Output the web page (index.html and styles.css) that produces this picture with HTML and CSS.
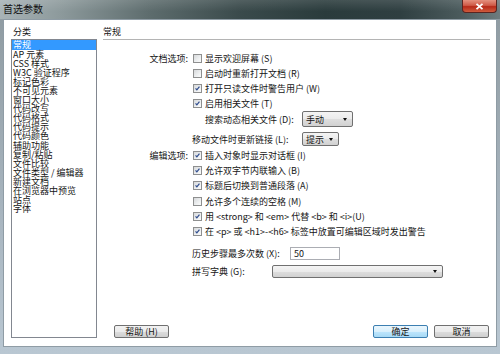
FILE: index.html
```html
<!DOCTYPE html>
<html lang="zh-CN">
<head>
<meta charset="utf-8">
<title>首选参数</title>
<link rel="stylesheet" href="styles.css">
</head>
<body>
<div class="window">
  <div class="titlebar">
    <span class="title">首选参数</span>
    <div class="close"><svg width="9" height="7" viewBox="0 0 9 7"><path d="M1.5 0.8 L7.5 6.2 M7.5 0.8 L1.5 6.2" stroke="#fff" stroke-width="1.8" fill="none"/></svg></div>
  </div>
  <div class="frame">
    <div class="client">
      <div class="sidebar">
        <div class="cap">分类</div>
        <ul class="list">
          <li class="sel">常规</li>
          <li>AP 元素</li>
          <li>CSS 样式</li>
          <li>W3C 验证程序</li>
          <li>标记色彩</li>
          <li>不可见元素</li>
          <li>窗口大小</li>
          <li>代码改写</li>
          <li>代码格式</li>
          <li>代码提示</li>
          <li>代码颜色</li>
          <li>辅助功能</li>
          <li>复制/粘贴</li>
          <li>文件比较</li>
          <li>文件类型 / 编辑器</li>
          <li>新建文档</li>
          <li>在浏览器中预览</li>
          <li>站点</li>
          <li>字体</li>
        </ul>
      </div>
      <div class="main">
        <div class="heading">常规</div>
        <div class="rows">
          <div class="row"><span class="lbl">文档选项:</span><span class="cb"></span><span>显示欢迎屏幕 (S)</span></div>
          <div class="row"><span class="lbl"></span><span class="cb"></span><span>启动时重新打开文档 (R)</span></div>
          <div class="row"><span class="lbl"></span><span class="cb on"><svg viewBox="0 0 9 9"><path d="M2 4.3 L3.7 6.3 L7 2"/></svg></span><span>打开只读文件时警告用户 (W)</span></div>
          <div class="row"><span class="lbl"></span><span class="cb on"><svg viewBox="0 0 9 9"><path d="M2 4.3 L3.7 6.3 L7 2"/></svg></span><span>启用相关文件 (T)</span></div>
          <div class="row sub r-search"><span class="slbl w97">搜索动态相关文件 (D):</span><span class="select s-manual"><span>手动</span><i class="arrow"></i></span></div>
          <div class="row sub2 r-move"><span class="slbl w110">移动文件时更新链接 (L):</span><span class="select s-hint"><span>提示</span><i class="arrow"></i></span></div>
          <div class="row r-edit"><span class="lbl">编辑选项:</span><span class="cb on"><svg viewBox="0 0 9 9"><path d="M2 4.3 L3.7 6.3 L7 2"/></svg></span><span>插入对象时显示对话框 (I)</span></div>
          <div class="row r-edit"><span class="lbl"></span><span class="cb on"><svg viewBox="0 0 9 9"><path d="M2 4.3 L3.7 6.3 L7 2"/></svg></span><span>允许双字节内联输入 (B)</span></div>
          <div class="row r-edit"><span class="lbl"></span><span class="cb on"><svg viewBox="0 0 9 9"><path d="M2 4.3 L3.7 6.3 L7 2"/></svg></span><span>标题后切换到普通段落 (A)</span></div>
          <div class="row r-edit"><span class="lbl"></span><span class="cb"></span><span>允许多个连续的空格 (M)</span></div>
          <div class="row r-edit"><span class="lbl"></span><span class="cb on"><svg viewBox="0 0 9 9"><path d="M2 4.3 L3.7 6.3 L7 2"/></svg></span><span>用 &lt;strong&gt; 和 &lt;em&gt; 代替 &lt;b&gt; 和 &lt;i&gt;(U)</span></div>
          <div class="row r-edit"><span class="lbl"></span><span class="cb on"><svg viewBox="0 0 9 9"><path d="M2 4.3 L3.7 6.3 L7 2"/></svg></span><span>在 &lt;p&gt; 或 &lt;h1&gt;-&lt;h6&gt; 标签中放置可编辑区域时发出警告</span></div>
          <div class="row sub2 r-hist"><span class="slbl w98">历史步骤最多次数 (X):</span><span class="input">50</span></div>
          <div class="row sub2 r-spell"><span class="slbl w80">拼写字典 (G):</span><span class="select s-dict"><span></span><i class="arrow"></i></span></div>
        </div>
        <div class="footer">
          <span class="btn">帮助 (H)</span>
          <span class="btn default">确定</span>
          <span class="btn">取消</span>
        </div>
      </div>
    </div>
  </div>
</div>
</body>
</html>
```

FILE: styles.css
```css
* { box-sizing: border-box; }
html, body { margin: 0; padding: 0; }
body {
  width: 500px;
  height: 354px;
  overflow: hidden;
  font-family: "Noto Sans CJK SC", "Liberation Sans", sans-serif;
  font-size: 9px;
  color: #151515;
  background: #a9b6bf;
}
.window {
  width: 500px;
  height: 354px;
  display: flex;
  flex-direction: column;
  background: linear-gradient(to bottom, #8e9aa0 0%, #a8b5bf 60%, #b9c7d2 100%);
}
.titlebar {
  height: 19px;
  display: flex;
  justify-content: space-between;
  align-items: flex-start;
  background:
    linear-gradient(to bottom, rgba(255,255,255,0.12) 0%, rgba(255,255,255,0) 60%),
    linear-gradient(to right, #a8b3b6 0%, #8d9a9c 12%, #5d6c6d 30%, #3a4a4b 48%, #2a3b3c 65%, #2f3f41 80%, #4a5a5c 92%, #6e7c7f 100%);
}
.title {
  font-size: 10px;
  line-height: 10px;
  margin: 4px 0 0 3px;
  color: #111;
}
.close {
  width: 35px;
  height: 13px;
  margin-right: 3px;
  border: 1px solid #5a2420;
  border-top: none;
  border-radius: 0 0 4px 4px;
  background: linear-gradient(to bottom, #e4917f 0%, #cf5a47 45%, #b72a19 55%, #cf5c3e 100%);
  display: flex;
  align-items: center;
  justify-content: center;
}
.frame {
  flex: 1;
  display: flex;
  padding: 0 3px 7px 3px;
}
.client {
  flex: 1;
  display: flex;
  background: #fff;
  border: 1px solid #8f9ca5;
  padding: 7px 6px 8px 7px;
}
.sidebar {
  width: 86px;
  display: flex;
  flex-direction: column;
}
.cap {
  height: 12px;
  line-height: 10px;
  padding-left: 2px;
}
.list {
  flex: 1;
  margin: 0;
  padding: 0;
  list-style: none;
  border: 1px solid #828790;
}
.list li {
  height: 9.1px;
  line-height: 9.1px;
  padding-left: 1px;
  white-space: nowrap;
}
.list li.sel {
  height: 9.6px;
  background: #3399ff;
  color: #fff;
}
.main {
  flex: 1;
  margin-left: 6px;
  display: flex;
  flex-direction: column;
}
.heading {
  height: 13px;
  line-height: 10px;
  border-bottom: 1px solid #b4b4b4;
}
.rows {
  margin-top: 11px;
  display: flex;
  flex-direction: column;
}
.row {
  height: 15px;
  display: flex;
  align-items: center;
  white-space: nowrap;
}
.lbl {
  width: 85px;
  text-align: right;
}
.cb {
  width: 9px;
  height: 9px;
  margin: 0 3px 0 5px;
  border: 1px solid #8e8f8f;
  background: linear-gradient(135deg, #d6d8da 0%, #eef0f1 60%, #fbfbfb 100%);
  display: flex;
}
.cb svg {
  width: 7px;
  height: 7px;
}
.cb svg path {
  fill: none;
  stroke: #2c4a8c;
  stroke-width: 1.5;
}
.sub { padding-left: 102px; }
.sub2 { padding-left: 89px; }
.r-search { height: 16px; }
.r-move { height: 16px; margin-top: 4px; }
.r-edit { height: 15.2px; }
.r-edit:first-of-type, .r-move + .r-edit { margin-top: 1px; }
.r-hist { margin-top: 7px; }
.r-spell { margin-top: 3px; }
.w97 { width: 97px; }
.w110 { width: 110px; }
.w98 { width: 98px; }
.w80 { width: 80px; }
.select {
  display: flex;
  align-items: center;
  justify-content: space-between;
  padding: 0 5px 0 3px;
  border: 1px solid #707070;
  border-radius: 2px;
  background: linear-gradient(to bottom, #f4f4f4 0%, #ebebeb 50%, #dedede 51%, #d1d1d1 100%);
}
.s-manual { width: 51px; height: 16px; }
.s-hint { width: 37px; height: 14px; }
.s-dict { width: 171px; height: 13px; }
.arrow {
  width: 0;
  height: 0;
  border-left: 2.5px solid transparent;
  border-right: 2.5px solid transparent;
  border-top: 3px solid #111;
}
.input {
  width: 50px;
  height: 13px;
  line-height: 11px;
  padding-left: 3px;
  border: 1px solid #abadb3;
  background: #fff;
}
.footer {
  margin-top: auto;
  display: flex;
  padding: 0 1px 0 11px;
}
.btn {
  width: 55px;
  height: 13.5px;
  line-height: 11px;
  text-align: center;
  border: 1px solid #707070;
  border-radius: 2px;
  background: linear-gradient(to bottom, #f2f2f2 0%, #ebebeb 50%, #dddddd 51%, #cfcfcf 100%);
}
.btn.default {
  margin-left: auto;
  margin-right: 6px;
  border-color: #3c7fb1;
  background: linear-gradient(to bottom, #eaf6fd 0%, #d9f0fc 50%, #bee6fd 51%, #a7d9f5 100%);
}
```
